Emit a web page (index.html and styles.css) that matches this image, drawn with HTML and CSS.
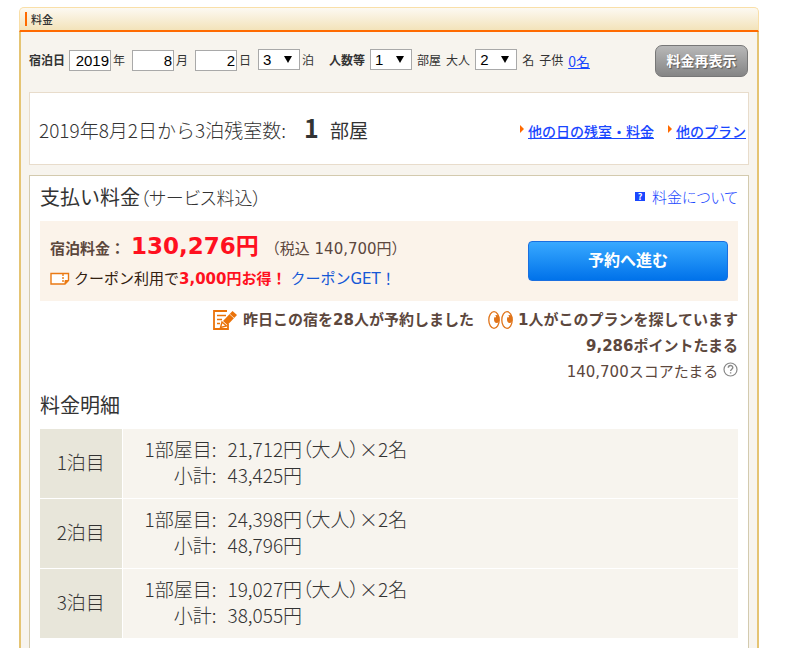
FILE: index.html
```
<!DOCTYPE html>
<html lang="ja">
<head>
    <meta charset="UTF-8">
    <meta name="viewport" content="width=device-width, initial-scale=1.0">
    <title>料金</title>
    <link rel="stylesheet" href="styles.css">
</head>
<body>
    <div class="page">
        <!-- 見出し -->
        <div class="head">
            <h1>料金</h1>
        </div>

        <div class="content">
            <!-- 検索条件 -->
            <form class="search">
                <div class="group">
                    <label class="strong" for="year">宿泊日</label>
                    <input type="text" id="year" value="2019">
                    <label for="year">年</label>
                </div>
                <div class="group">
                    <input type="text" id="month" value="8">
                    <label for="month">月</label>
                </div>
                <div class="group">
                    <input type="text" id="day" value="2">
                    <label for="day">日</label>
                </div>
                <div class="group">
                    <span class="select"><select id="nights"><option>1</option><option>2</option><option selected>3</option></select></span>
                    <label for="nights">泊</label>
                </div>
                <div class="group people">
                    <label class="strong" for="rooms">人数等</label>
                    <span class="select"><select id="rooms"><option>1</option><option>2</option></select></span>
                    <label for="rooms">部屋</label>
                    <label for="adults">大人</label>
                    <span class="select"><select id="adults"><option>1</option><option selected>2</option></select></span>
                    <label for="adults">名</label>
                    <span>子供</span>
                    <a class="child" href="#">0名</a>
                </div>
                <button class="reload-btn" type="submit">料金再表示</button>
            </form>

            <!-- 残室数 -->
            <div class="box stock">
                <p class="stock-text">2019年8月2日から3泊残室数: <strong>1</strong> <span class="unit">部屋</span></p>
                <ul class="stock-links">
                    <li><a href="#">他の日の残室・料金</a></li>
                    <li><a href="#">他のプラン</a></li>
                </ul>
            </div>

            <!-- 支払い料金 -->
            <div class="box payment">
                <div class="payment-head">
                    <h2>支払い料金<small>（サービス料込）</small></h2>
                    <a class="about" href="#"><span class="help" aria-hidden="true">?</span>料金について</a>
                </div>

                <div class="price">
                    <div>
                        <p class="price-line"><b>宿泊料金：</b><strong>130,276円</strong><span>（税込 140,700円）</span></p>
                        <p class="coupon">
                            <svg width="20" height="14" viewBox="0 0 20 14" fill="none" stroke="#ea7a14" stroke-width="1.4">
                                <path d="M1 1.5h17.500v7l-3.500 3.500H1z" fill="#fff"/>
                                <path d="M13 2v9" stroke-dasharray="2 1"/>
                                <path d="M18.500 8.500H15V12z" fill="#ea7a14" stroke-width="1"/>
                            </svg>
                            <span>クーポン利用で<b>3,000円お得！</b></span>
                            <a href="#">クーポンGET！</a>
                        </p>
                    </div>
                    <button class="reserve-btn" type="button">予約へ進む</button>
                </div>

                <div class="notes">
                    <div class="note-row">
                        <span class="note">
                            <svg width="25" height="20" viewBox="0 0 25 20" fill="none">
                                <path d="M14 1H1v18h14v-5" stroke="#ea730a" stroke-width="1.8"/>
                                <path d="M4 5.5h9M4 9.5h5M4 13.5h3" stroke="#ea730a" stroke-width="1.6"/>
                                <path d="M19.500 1l4.500 4-9.500 10-4.500-4z" fill="#ea730a"/>
                                <path d="M9 12l4.500 4L7.500 17.500z" fill="#fff" stroke="#ea730a" stroke-width="1.4"/>
                                <path d="M16.500 4l4.500 4" stroke="#fff" stroke-width=".7"/>
                            </svg>
                            昨日この宿を28人が予約しました
                        </span>
                        <span class="note">
                            <svg width="25" height="18" viewBox="0 0 25 18">
                                <ellipse cx="6" cy="9" rx="5.200" ry="8.300" fill="#fff" stroke="#e0741a" stroke-width="1.3"/>
                                <ellipse cx="19" cy="9" rx="5.200" ry="8.300" fill="#fff" stroke="#e0741a" stroke-width="1.3"/>
                                <ellipse cx="8.700" cy="8" rx="2.700" ry="4" fill="#e0741a"/>
                                <ellipse cx="21.700" cy="8" rx="2.700" ry="4" fill="#e0741a"/>
                                <circle cx="7" cy="5.500" r="1" fill="#fff"/>
                                <circle cx="20" cy="5.500" r="1" fill="#fff"/>
                            </svg>
                            1人がこのプランを探しています
                        </span>
                    </div>
                    <p class="point">9,286ポイントたまる</p>
                    <p class="score">140,700スコアたまる
                        <svg width="15" height="15" viewBox="0 0 15 15" fill="none" stroke="#888" stroke-width="1.2">
                            <circle cx="7.5" cy="7.5" r="6.5"/>
                            <path d="M5.3 5.8c0-3 4.5-3 4.5-.3 0 1.7-2.2 1.7-2.2 3.5M7.6 10.2v1.4" stroke-width="1.4"/>
                        </svg>
                    </p>
                </div>

                <!-- 料金明細 -->
                <h2>料金明細</h2>
                <table class="detail">
                    <tr>
                        <th scope="row">1泊目</th>
                        <td>
                            <div class="line"><span>1部屋目:</span><span>21,712円（大人）×2名</span></div>
                            <div class="line"><span>小計:</span><span>43,425円</span></div>
                        </td>
                    </tr>
                    <tr>
                        <th scope="row">2泊目</th>
                        <td>
                            <div class="line"><span>1部屋目:</span><span>24,398円（大人）×2名</span></div>
                            <div class="line"><span>小計:</span><span>48,796円</span></div>
                        </td>
                    </tr>
                    <tr>
                        <th scope="row">3泊目</th>
                        <td>
                            <div class="line"><span>1部屋目:</span><span>19,027円（大人）×2名</span></div>
                            <div class="line"><span>小計:</span><span>38,055円</span></div>
                        </td>
                    </tr>
                </table>
            </div>
        </div>
    </div>
</body>
</html>
```
FILE: styles.css
```
/* 全体 */
* {
    box-sizing: border-box;
}

body {
    margin: 0;
    background-color: #fff;
    color: #333;
    font-family: "Noto Sans CJK JP", sans-serif;
    font-size: 12px;
}

h1, h2, p, ul {
    margin: 0;
    padding: 0;
}

a {
    color: #1a47ff;
}

.page {
    display: flex;
    flex-direction: column;
    min-height: 100vh;
    padding: 7px 41px 0 19px;
}

/* 見出し */
.head {
    padding: 4px 5px;
    border: 1px solid #f9dfa8;
    border-bottom: 2px solid #ff6a00;
    border-radius: 5px 5px 0 0;
    background: linear-gradient(#fcf9f2, #f3e3ba);
}

.head h1 {
    padding-left: 4px;
    border-left: 2px solid #ff6a00;
    font-size: 11px;
    line-height: 14px;
    font-weight: 500;
}

.content {
    flex: 1;
    display: flex;
    flex-direction: column;
    padding: 0 8px;
    border: 2px solid #e5c473;
    border-width: 0 2px;
    background-color: #f7f4ee;
}

/* 検索条件 */
.search {
    display: flex;
    align-items: center;
    gap: 7px;
    height: 60px;
    padding: 0 1px 3px 0;
    white-space: nowrap;
}

.group {
    display: flex;
    align-items: center;
    gap: 2px;
}

.group label,
.group > span {
    padding-bottom: 2px;
}

.people {
    gap: 5px;
    margin-left: 8px;
}

.strong {
    margin-right: 2px;
    font-weight: bold;
}

.people .strong {
    margin-right: 0;
}

.search input {
    width: 42px;
    height: 21px;
    padding: 1px;
    border: 1px solid #a9a9a9;
    background-color: #fff;
    color: #000;
    font-family: "Liberation Sans", sans-serif;
    font-size: 15px;
    text-align: right;
}

.select {
    position: relative;
    display: flex;
}

.select::after {
    content: "";
    position: absolute;
    top: 7px;
    right: 8px;
    border: 4px solid transparent;
    border-top: 7px solid #000;
    border-bottom: 0;
    pointer-events: none;
}

.search select {
    appearance: none;
    width: 42px;
    height: 21px;
    padding: 0 4px;
    border: 1px solid #a9a9a9;
    border-radius: 0;
    background-color: #fff;
    color: #000;
    font-family: "Liberation Sans", sans-serif;
    font-size: 15px;
}

.child {
    font-size: 14px;
}

.reload-btn {
    width: 93px;
    height: 32px;
    margin-left: auto;
    padding: 0 0 2px;
    border: 1px solid #777;
    border-radius: 7px;
    background: linear-gradient(#b8b8b8, #858585);
    color: #fff;
    font-family: inherit;
    font-size: 14px;
    font-weight: bold;
    text-shadow: 1px 1px 1px #555;
}

/* 残室数 */
.box {
    border: 1px solid #e8dccb;
    background-color: #fff;
}

.stock {
    display: flex;
    align-items: center;
    justify-content: space-between;
    height: 73px;
    padding: 0 2px 0 9px;
    white-space: nowrap;
}

.stock-text {
    padding-bottom: 3px;
    font-size: 19px;
    font-weight: 300;
}

.stock-text strong {
    margin: 0 7px 0 14px;
    font-size: 25px;
    line-height: 32px;
    font-weight: bold;
}

.unit {
    font-weight: 400;
}

.stock-links {
    display: flex;
    gap: 14px;
    padding-top: 4px;
    list-style: none;
    font-size: 14px;
    font-weight: 500;
}

.stock-links li {
    display: flex;
    gap: 4px;
}

.stock-links li::before {
    content: "";
    height: 0;
    margin-top: 4px;
    border: 4px solid transparent;
    border-left-color: #ff6a00;
    border-right: 0;
}

/* 支払い料金 */
.payment {
    flex: 1;
    margin-top: 10px;
    padding: 6px 10px 10px;
    border-color: #d3caae;
    border-bottom: 0;
}

.payment h2 {
    font-size: 20px;
    line-height: 30px;
    font-weight: 400;
}

.payment small {
    font-size: 18px;
    font-weight: 300;
    font-feature-settings: "palt";
}

.payment-head {
    display: flex;
    align-items: center;
    justify-content: space-between;
    height: 30px;
}

.about {
    display: flex;
    align-items: center;
    gap: 7px;
    padding-bottom: 2px;
    font-size: 15px;
    font-weight: 300;
    text-decoration: none;
    font-feature-settings: "palt";
}

.help {
    width: 10px;
    background-color: #1a47ff;
    color: #fff;
    font-size: 9px;
    line-height: 9px;
    font-weight: bold;
    text-align: center;
}

.price {
    display: flex;
    align-items: center;
    justify-content: space-between;
    height: 80px;
    margin-top: 9px;
    padding: 0 10px;
    background-color: #fbf3ea;
    white-space: nowrap;
}

.price,
.notes {
    color: #5c473d;
    font-family: "DejaVu Sans", "Noto Sans CJK JP", sans-serif;
    font-size: 15px;
}

.price-line {
    display: flex;
    align-items: baseline;
    line-height: 32px;
}

.price-line strong {
    margin: 0 6px;
    color: #ff1020;
    font-size: 23px;
}

.coupon {
    display: flex;
    align-items: center;
    gap: 4px;
    color: #332010;
    line-height: 28px;
}

.coupon b {
    color: #ff1020;
}

.coupon a {
    color: #1558d6;
    text-decoration: none;
}

.reserve-btn {
    width: 200px;
    height: 40px;
    padding: 0 0 4px;
    border: 1px solid #1a6fe0;
    border-radius: 4px;
    background: linear-gradient(#38a9ff, #0072ea);
    color: #fff;
    font-family: "Noto Sans CJK JP", sans-serif;
    font-size: 16px;
    font-weight: bold;
}

.notes {
    padding: 6px 0 5px;
    text-align: right;
    line-height: 26px;
    white-space: nowrap;
}

.note-row {
    display: flex;
    justify-content: flex-end;
    gap: 14px;
    font-weight: bold;
}

.note {
    display: flex;
    align-items: center;
    gap: 5px;
}

.point {
    font-weight: bold;
}

.score svg {
    vertical-align: 0;
}

/* 料金明細 */
.detail {
    width: 100%;
    margin-top: 9px;
    border-collapse: collapse;
    font-size: 19px;
    line-height: 26px;
    font-weight: 300;
}

.detail tr + tr {
    border-top: 1px solid #fff;
}

.detail th {
    width: 82px;
    padding: 0 0 3px;
    border-right: 1px solid #fff;
    background-color: #e8e6da;
    font-weight: 300;
}

.detail td {
    padding: 7px 18px 10px;
    background-color: #f7f4ee;
}

.line {
    display: grid;
    grid-template-columns: 76px 1fr;
    gap: 11px;
    font-feature-settings: "palt";
}

.line span:first-child {
    text-align: right;
}
```
